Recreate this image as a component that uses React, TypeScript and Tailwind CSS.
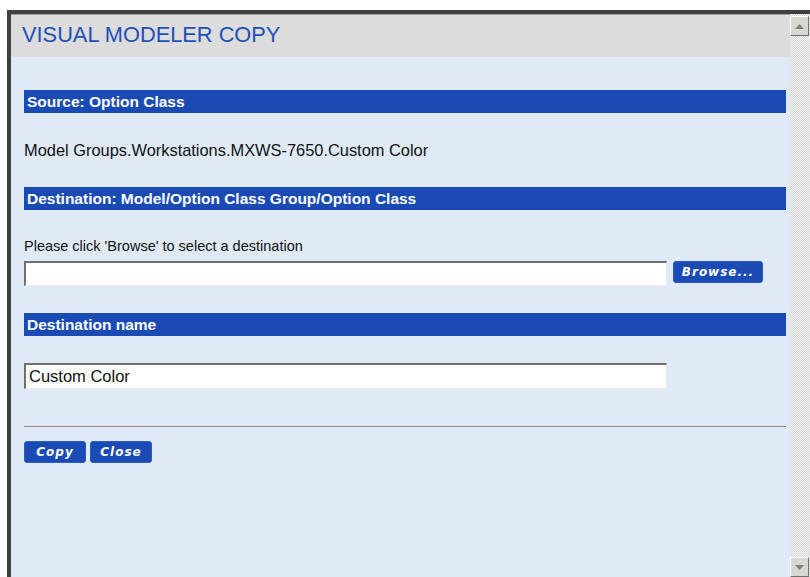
const font = { fontFamily: '"Liberation Sans", Arial, sans-serif' };

function SectionBar({ children }: { children: React.ReactNode }) {
  return (
    <div className="h-[23px] bg-[#1a4bb4] pl-[3px] text-[15.5px] font-bold leading-[23px] text-white">
      {children}
    </div>
  );
}

function BlueButton({ label, width }: { label: string; width: string }) {
  return (
    <button
      className={`${width} h-[22px] rounded-[3px] border border-[#2f5cc4] bg-[#1a4bb4] text-[12px] font-bold italic tracking-[1px] text-white`}
      style={{ fontFamily: '"DejaVu Sans", Verdana, sans-serif' }}
    >
      {label}
    </button>
  );
}

function Arrow({ up }: { up?: boolean }) {
  return (
    <div className="flex h-[20px] w-[19px] items-center justify-center border-t border-l border-t-white border-l-white border-r border-b border-r-[#707070] border-b-[#707070] bg-[#d8d8d0]">
      <svg width="9" height="5" viewBox="0 0 9 5">
        <path d={up ? "M0 5 L4.5 0 L9 5 Z" : "M0 0 L4.5 5 L9 0 Z"} fill="#808080" />
      </svg>
    </div>
  );
}

export default function App() {
  return (
    <div className="h-[577px] w-[810px] overflow-hidden bg-white pl-[7px] pt-[10px]" style={font}>
      <div className="flex h-[567px] border-t-[4px] border-l-[4px] border-t-[#404040] border-l-[#404040]">
        <div className="flex flex-1 flex-col border-t border-[#a0a0a0]">
          {/* title strip */}
          <div className="h-[42px] bg-[#dcdcdc] pl-[11px] pt-[8px] text-[21.8px] leading-[24px] text-[#1f50b8]">
            VISUAL MODELER COPY
          </div>

          <div className="flex-1 bg-[#e0eaf6] pl-[13px] pr-[4px] pt-[33px]">
            <SectionBar>Source: Option Class</SectionBar>
            <div className="mt-[28px] text-[16.4px] leading-[18px] text-[#111]">
              Model Groups.Workstations.MXWS-7650.Custom Color
            </div>

            <div className="mt-[28px]">
              <SectionBar>Destination: Model/Option Class Group/Option Class</SectionBar>
            </div>
            <div className="mt-[28px] text-[14.5px] leading-[16px] text-[#111]">
              Please click 'Browse' to select a destination
            </div>
            <div className="mt-[7px] flex items-start gap-[6px]">
              <div className="h-[25px] w-[643px] border-t-2 border-l-2 border-t-[#707070] border-l-[#707070] border-b border-r border-b-[#e8e8e8] border-r-[#e8e8e8] bg-white" />
              <BlueButton label="Browse..." width="w-[90px]" />
            </div>

            <div className="mt-[27px]">
              <SectionBar>Destination name</SectionBar>
            </div>
            <div className="mt-[27px] flex h-[26px] w-[643px] items-center border-t-2 border-l-2 border-t-[#707070] border-l-[#707070] border-b border-r border-b-[#e8e8e8] border-r-[#e8e8e8] bg-white pl-[3px] text-[16.5px] text-[#111]">
              Custom Color
            </div>

            <div className="mt-[37px] h-[2px] border-t border-[#8c8c8c] bg-[#f0f0f0]" />
            <div className="mt-[13px] flex gap-[4px]">
              <BlueButton label="Copy" width="w-[62px]" />
              <BlueButton label="Close" width="w-[62px]" />
            </div>
          </div>
        </div>

        {/* scrollbar */}
        <div
          className="flex w-[20px] flex-col justify-between bg-[#ececec] pt-[2px]"
          style={{
            backgroundImage:
              "repeating-conic-gradient(#d8d8d8 0% 25%, #f4f4f4 0% 50%)",
            backgroundSize: "2px 2px",
          }}
        >
          <Arrow up />
          <Arrow />
        </div>
      </div>
    </div>
  );
}
